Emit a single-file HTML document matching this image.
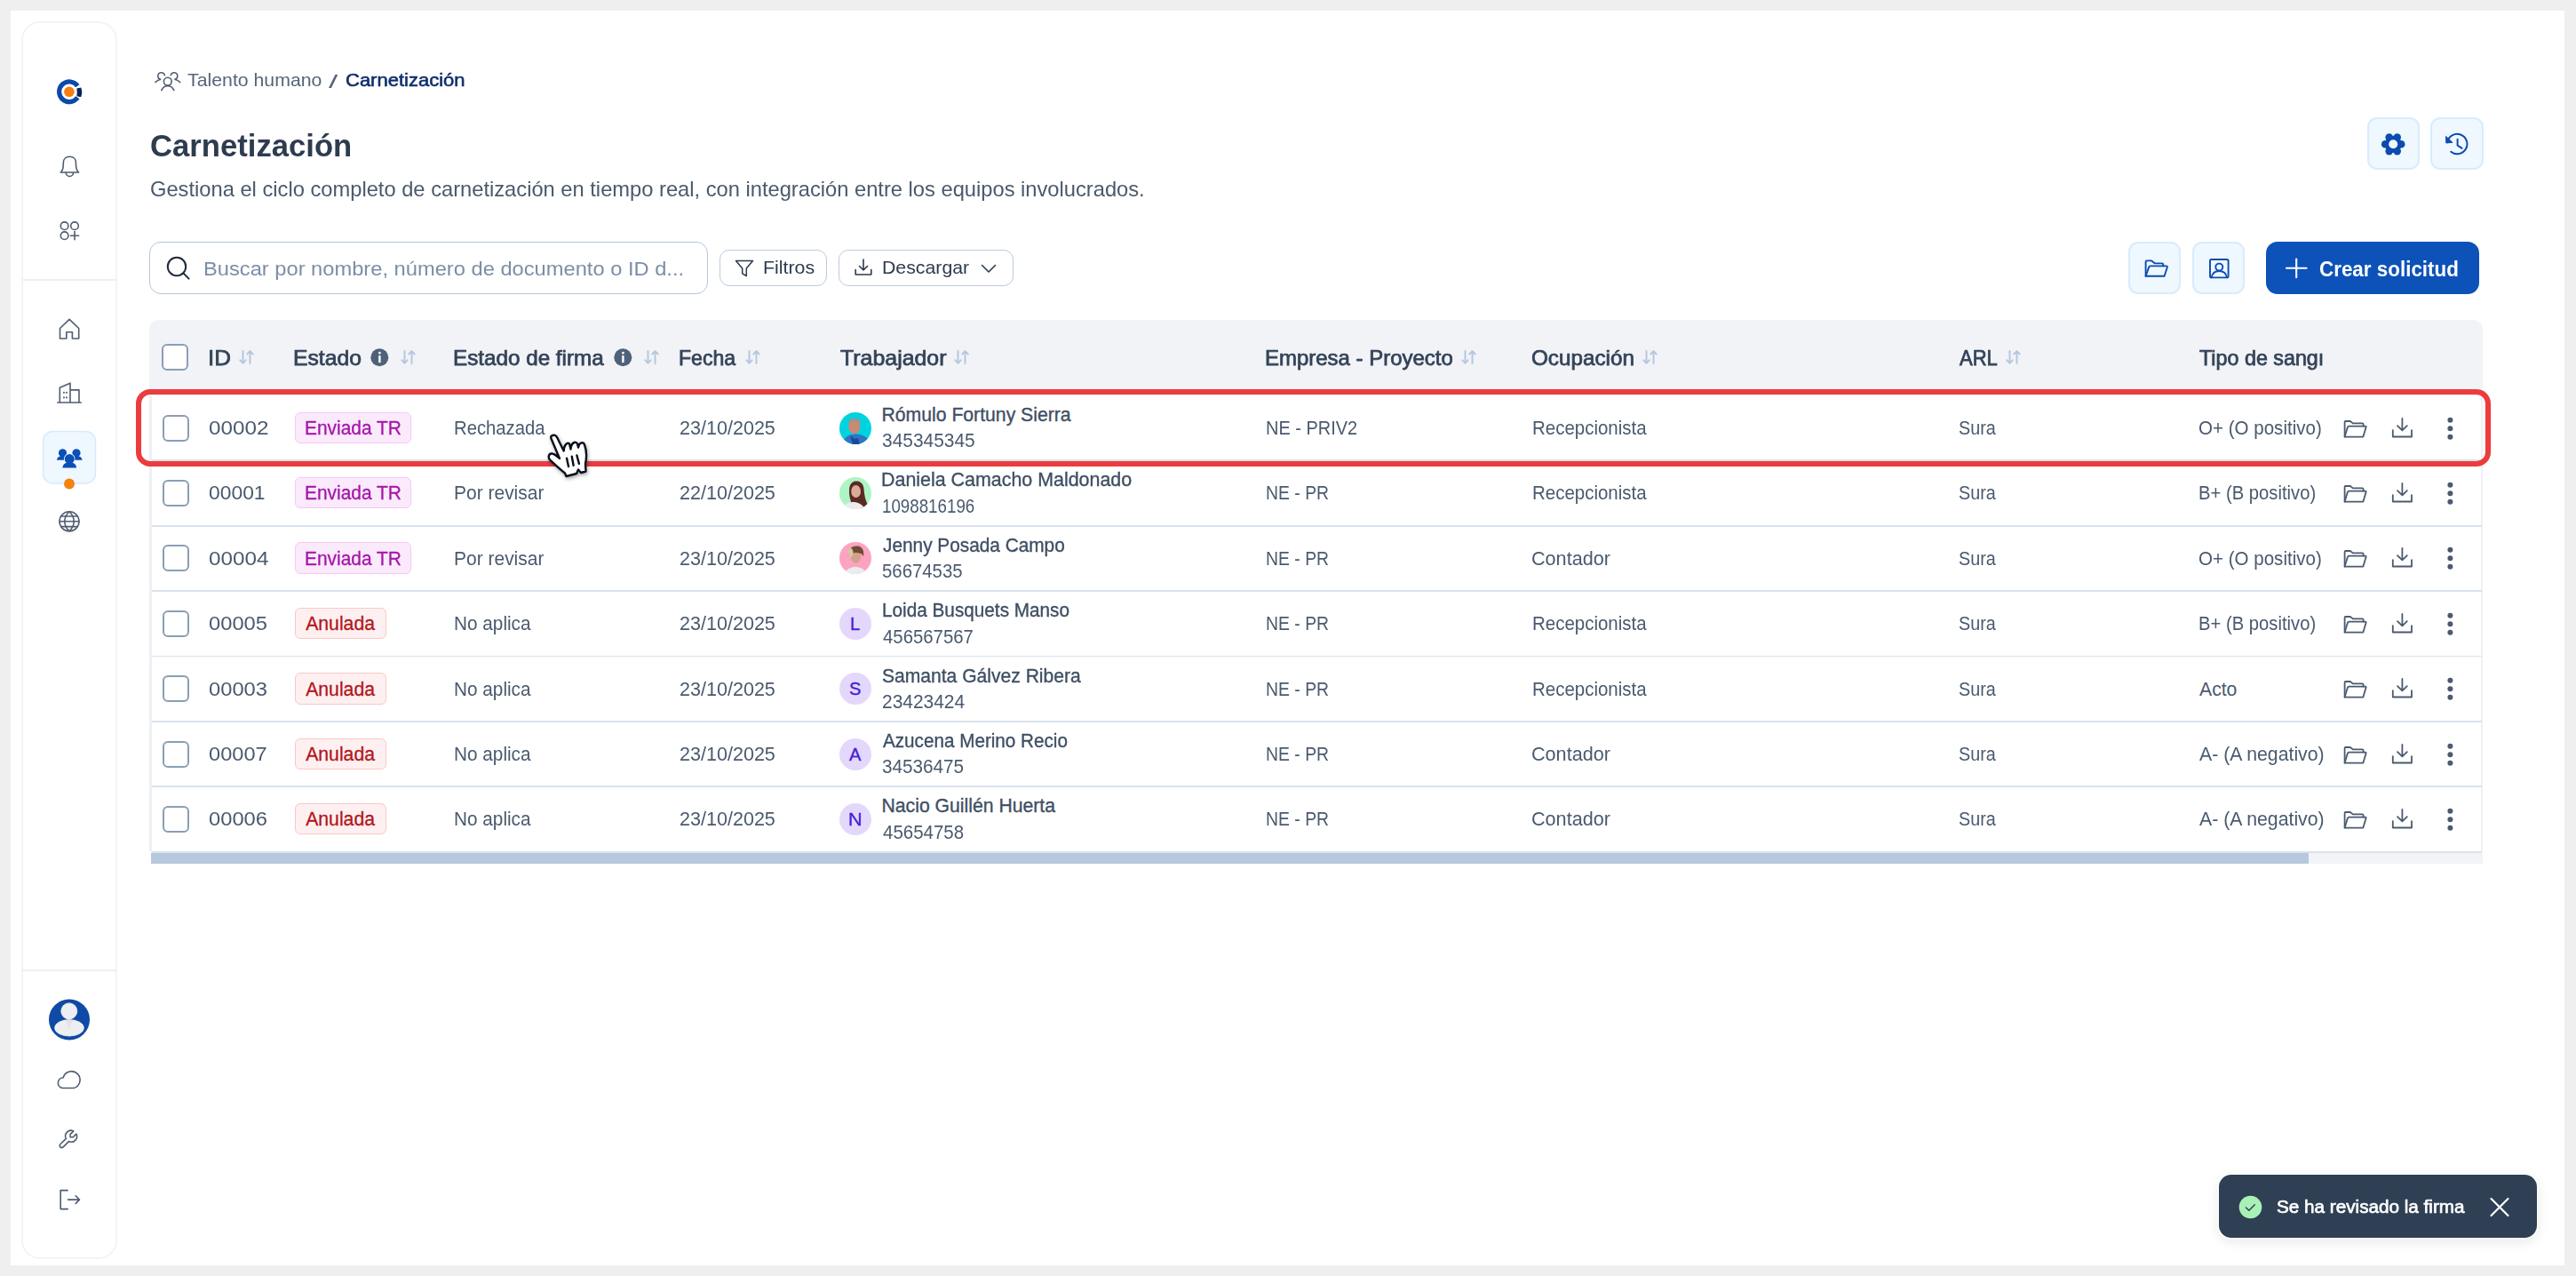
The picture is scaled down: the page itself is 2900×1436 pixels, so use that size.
<!DOCTYPE html>
<html><head><meta charset="utf-8"><style>
html,body{margin:0;padding:0;}
body{width:2900px;height:1436px;background:#efefef;position:relative;overflow:hidden;font-family:'Liberation Sans', sans-serif;}
svg{overflow:visible}
</style></head><body>
<div style="position:absolute;left:12px;top:12px;width:2875px;height:1412px;background:#fff"></div><div style="position:absolute;left:24px;top:24px;width:107.6px;height:1393px;border:2px solid #f2f4f7;border-radius:21px;box-sizing:border-box"></div><div style="position:absolute;left:25px;top:314px;width:105.6px;height:2px;background:#edeff4"></div><div style="position:absolute;left:25px;top:1091px;width:105.6px;height:2px;background:#edeff4"></div><svg style="position:absolute;left:0;top:0" width="140" height="1436" viewBox="0 0 140 1436">
<g fill="none" stroke="#4f5d70" stroke-width="1.6" stroke-linecap="round" stroke-linejoin="round">
<path d="M68.2 194 C70.6 192 71.3 189 71.3 185 V183.2 C71.3 178.9 74.4 176.2 78.4 176.2 C82.4 176.2 85.5 178.9 85.5 183.2 V185 C85.5 189 86.2 192 88.6 194 Z"/>
<path d="M74.3 194.4 A4.1 4.1 0 0 0 82.5 194.4"/>
<circle cx="72.6" cy="254.2" r="4.3"/><circle cx="84" cy="254.2" r="4.3"/><circle cx="72.6" cy="265.2" r="4.3"/>
<path d="M84 260.6 V269.8 M79.4 265.2 H88.6"/>
<path d="M67.5 381 V369.5 L78.1 359.3 L88.7 369.5 V381 H81.4 V373.8 H74.8 V381 Z"/>
<path d="M64.8 453 H91.2 M67.3 453 V436.2 L79 431.2 V453 M79 438.9 H89 V453"/>
<path d="M72 441.6 v.3 M75 441.6 v.3 M72 447.2 v.3 M75 447.2 v.3" stroke-width="1.9"/>
<circle cx="78" cy="586.8" r="11"/>
<path d="M67 586.8 H89 M68.6 581 H87.4 M68.6 592.6 H87.4"/>
<path d="M78 575.8 C74.2 579.5 72.8 583 72.8 586.8 C72.8 590.6 74.2 594.1 78 597.8 C81.8 594.1 83.2 590.6 83.2 586.8 C83.2 583 81.8 579.5 78 575.8 Z"/>
<path d="M70.2 1224.5 A5.9 5.9 0 0 1 71.2 1212.8 A9.6 9.6 0 1 1 83.2 1224.5 Z"/>
<path d="M76.2 1339.6 H68.2 V1360.6 H76.2 M76.6 1350.1 H89.5 M85.2 1345.8 L89.5 1350.1 L85.2 1354.4"/>
</g>
<g transform="translate(64.2 1269.2) scale(1.06)" fill="none" stroke="#4f5d70" stroke-width="1.5" stroke-linecap="round" stroke-linejoin="round">
<path d="M17 10h-3v-3l3.5-3.5a6 6 0 0 0-8 8l-6 6a2 2 0 0 0 3 3l6-6a6 6 0 0 0 8-8l-3.5 3.5"/>
</g>
<path d="M89.47 95.27 A14 14 0 1 0 89.47 111.33 L85.21 108.35 A8.8 8.8 0 1 1 85.21 98.25 Z" fill="#0b49aa"/>
<circle cx="77.9" cy="103.3" r="5.8" fill="#f57f0c"/>
<path d="M86.4 99.6 L91.2 98.6 A14.5 14.5 0 0 1 91.2 109.2 L86.4 108.2 Q87.1 103.9 86.4 99.6 Z" fill="#06215c"/>
<rect x="48.5" y="485.5" width="59" height="58.5" rx="11" fill="#eff7ff" stroke="#d6ebfc" stroke-width="1.5"/>
<g fill="#0b4fb8">
<circle cx="70.5" cy="509.8" r="4.6"/><path d="M63.9 517.8 C64.3 514.4 66.9 512.9 70.5 512.9 C74.1 512.9 76.7 514.4 77.1 517.8 Z"/>
<circle cx="86" cy="509.8" r="4.6"/><path d="M79.4 517.8 C79.8 514.4 82.4 512.9 86 512.9 C89.6 512.9 92.2 514.4 92.6 517.8 Z"/>
<g stroke="#eff7ff" stroke-width="2" paint-order="stroke">
<circle cx="78.25" cy="516.5" r="5.3"/><path d="M70.4 526.6 C70.9 521.8 74 520.2 78.25 520.2 C82.5 520.2 85.6 521.8 86.1 526.6 Z"/>
</g>
<circle cx="78.25" cy="516.5" r="5.3"/>
</g>
<circle cx="78" cy="544.5" r="6" fill="#f5820f"/>
<circle cx="78" cy="1147.4" r="23" fill="#0e4aa6"/>
<ellipse cx="78" cy="1156.8" rx="16.4" ry="9.2" fill="#eceef1" stroke="#f8f8f6" stroke-width="0.8"/>
<circle cx="77.8" cy="1137.9" r="9" fill="#eceef1" stroke="#f8f8f6" stroke-width="0.8"/>
<path d="M73.8 1148 L78 1158 L82.2 1148 Z" fill="#e3e4e7"/>
</svg><svg style="position:absolute;left:168px;top:74px" width="44" height="34" viewBox="168 74 44 34" fill="none" stroke="#4f5d70" stroke-width="1.6" stroke-linecap="round">
<path d="M185.3 84.6 A3.8 3.8 0 1 0 181.2 89.3 Q177.4 89.8 175 92.6"/>
<path d="M192.3 84.6 A3.8 3.8 0 1 1 196.4 89.3 Q200.2 89.8 202.6 92.6"/>
<circle cx="188.8" cy="91.7" r="4.4"/>
<path d="M181.8 101.6 Q184 96.8 188.8 96.8 Q193.6 96.8 195.9 101.6"/>
</svg><div style="position:absolute;left:2664.5px;top:132.4px;width:59.0px;height:59.0px;background:#eff7ff;border:2px solid #d8ecfc;border-radius:11px;box-sizing:border-box"></div><div style="position:absolute;left:2736.4px;top:132.4px;width:59.19999999999982px;height:59.0px;background:#eff7ff;border:2px solid #d8ecfc;border-radius:11px;box-sizing:border-box"></div><svg style="position:absolute;left:2660px;top:128px" width="140" height="70" viewBox="2660 128 140 70">
<g fill="#0c4bb0"><circle cx="2694.2" cy="162.3" r="9.6"/><circle cx="2703.20" cy="162.30" r="4.3"/><circle cx="2698.70" cy="170.09" r="4.3"/><circle cx="2689.70" cy="170.09" r="4.3"/><circle cx="2685.20" cy="162.30" r="4.3"/><circle cx="2689.70" cy="154.51" r="4.3"/><circle cx="2698.70" cy="154.51" r="4.3"/></g>
<circle cx="2694.2" cy="162.3" r="5" fill="#eff7ff"/>
<path d="M2755.2 160.2 A11.2 11.2 0 1 1 2759.2 170.8" fill="none" stroke="#0c4bb0" stroke-width="2" stroke-linecap="round"/>
<path d="M2753.6 153.4 L2753.8 160.9 L2761 160.4 Z" fill="#0c4bb0" stroke="#0c4bb0" stroke-width="1" stroke-linejoin="round"/>
<path d="M2766.6 156.8 V163.6 L2771.6 166.8" fill="none" stroke="#0c4bb0" stroke-width="2" stroke-linecap="round" stroke-linejoin="round"/>
</svg><div style="position:absolute;left:168.4px;top:271.8px;width:628.6px;height:59.39999999999998px;border:1.7px solid #b5c6dc;border-radius:13px;box-sizing:border-box"></div><svg style="position:absolute;left:186px;top:287px" width="30" height="30" viewBox="0 0 30 30" fill="none" stroke="#1f2b3b" stroke-width="2.0" stroke-linecap="round">
<circle cx="13" cy="13" r="10.2"/><path d="M20.6 20.6l6 6"/>
</svg><div style="position:absolute;left:810.2px;top:280.9px;width:120.89999999999998px;height:41.10000000000002px;border:1.9px solid #bccbdf;border-radius:11px;box-sizing:border-box"></div><svg style="position:absolute;left:826px;top:291px" width="24" height="22" viewBox="0 0 24 22" fill="none" stroke="#2c3a4e" stroke-width="1.5" stroke-linejoin="round">
<path d="M2.5 2.5h19l-7.2 8.6v8.4l-4.6-2.6v-5.8z"/>
</svg><div style="position:absolute;left:943.6px;top:280.9px;width:197.69999999999993px;height:41.10000000000002px;border:1.9px solid #bccbdf;border-radius:11px;box-sizing:border-box"></div><svg style="position:absolute;left:960px;top:290px" width="24" height="22" viewBox="0 0 24 22" fill="none" stroke="#2c3a4e" stroke-width="1.6" stroke-linecap="round" stroke-linejoin="round">
<path d="M3.2 13.5v5.5h17.6v-5.5"/><path d="M12 2v12M7.5 9.5L12 14l4.5-4.5"/>
</svg><svg style="position:absolute;left:1103px;top:295px" width="20" height="14" viewBox="0 0 20 14" fill="none" stroke="#2c3a4e" stroke-width="1.6" stroke-linecap="round" stroke-linejoin="round">
<path d="M2.5 3.5L10 11l7.5-7.5"/>
</svg><div style="position:absolute;left:2395.5px;top:271.7px;width:59.80000000000018px;height:59.60000000000002px;background:#eff7ff;border:2px solid #d8ecfc;border-radius:11px;box-sizing:border-box"></div><div style="position:absolute;left:2467.6px;top:271.7px;width:59.59999999999991px;height:59.60000000000002px;background:#eff7ff;border:2px solid #d8ecfc;border-radius:11px;box-sizing:border-box"></div><svg style="position:absolute;left:2400px;top:280px" width="130" height="45" viewBox="2400 280 130 45" fill="none" stroke="#0c4bb0" stroke-width="1.9" stroke-linejoin="round" stroke-linecap="round">
<path d="M2415.6 310.8 V294.8 Q2415.6 293.4 2417 293.4 H2422.2 L2426 296.4 H2434 Q2435.2 296.4 2435.2 297.6 V299.4"/>
<path d="M2415.6 310.8 L2419.2 300.6 Q2419.6 299.4 2420.8 299.4 H2438.8 Q2440.2 299.4 2439.8 300.8 L2436.6 310.8 H2415.6 Z"/>
<rect x="2488" y="292" width="20.6" height="20.4" rx="1.6"/>
<circle cx="2498.3" cy="300.6" r="4"/>
<path d="M2489.6 312.2 C2490.6 307.4 2494 305 2498.3 305 C2502.6 305 2506 307.4 2507 312.2"/>
</svg><div style="position:absolute;left:2551.2px;top:271.7px;width:240.0px;height:59.60000000000002px;background:#0c52b9;border-radius:13px"></div><svg style="position:absolute;left:2572px;top:290px" width="27" height="27" viewBox="0 0 27 27" fill="none" stroke="#fff" stroke-width="2.1" stroke-linecap="round">
<path d="M13.2 1.6v20.6M2 11.8h22.6"/>
</svg><div style="position:absolute;left:168.2px;top:360px;width:2626.6000000000004px;height:84.80000000000001px;background:#f1f3f7;border-radius:11px 11px 0 0"></div><div style="position:absolute;left:168.2px;top:444.8px;width:2.5999999999999943px;height:513.8000000000002px;background:#eef0f5"></div><div style="position:absolute;left:2793.2000000000003px;top:444.8px;width:1.599999999999909px;height:513.8000000000002px;background:#eff1f6"></div><div style="position:absolute;left:170.79999999999998px;top:517.3000000000001px;width:2623.5px;height:1.8999999999999773px;background:#d9e2ee"></div><div style="position:absolute;left:170.79999999999998px;top:590.7px;width:2623.5px;height:1.8999999999999773px;background:#d9e2ee"></div><div style="position:absolute;left:170.79999999999998px;top:664.1px;width:2623.5px;height:1.8999999999999773px;background:#d9e2ee"></div><div style="position:absolute;left:170.79999999999998px;top:737.5000000000001px;width:2623.5px;height:1.8999999999999773px;background:#d9e2ee"></div><div style="position:absolute;left:170.79999999999998px;top:810.9px;width:2623.5px;height:1.8999999999999773px;background:#d9e2ee"></div><div style="position:absolute;left:170.79999999999998px;top:884.3000000000001px;width:2623.5px;height:1.8999999999999773px;background:#d9e2ee"></div><div style="position:absolute;left:170.79999999999998px;top:957.7000000000002px;width:2623.5px;height:1.8999999999999773px;background:#d9e2ee"></div><div style="position:absolute;left:169.7px;top:959.5px;width:2625.1000000000004px;height:12.100000000000023px;background:#f1f3f7"></div><div style="position:absolute;left:169.7px;top:959.5px;width:2429.8px;height:12.100000000000023px;background:#b7c8dd"></div><div style="position:absolute;left:181.5px;top:387.3px;width:30.0px;height:30.0px;border:2px solid #8b9eb4;border-radius:6px;box-sizing:border-box;background:#fff"></div><svg style="position:absolute;left:268.5px;top:394px" width="17" height="16" viewBox="0 0 17 16" fill="none" stroke="#b4c6de" stroke-width="1.9" stroke-linecap="round" stroke-linejoin="round">
<path d="M4.5 0.9v13.8M1.3 11.3l3.2 3.4 3.2-3.4"/><path d="M12.5 15.1V1.1M9.3 4.5l3.2-3.4 3.2 3.4"/></svg><svg style="position:absolute;left:416.8px;top:392px" width="21" height="21" viewBox="0 0 21 21">
<circle cx="10.3" cy="10.2" r="10" fill="#4f6179"/><rect x="9.2" y="3.9" width="2.4" height="2.5" fill="#fff"/><rect x="9.2" y="8.1" width="2.4" height="8" fill="#fff"/></svg><svg style="position:absolute;left:450.5px;top:394px" width="17" height="16" viewBox="0 0 17 16" fill="none" stroke="#b4c6de" stroke-width="1.9" stroke-linecap="round" stroke-linejoin="round">
<path d="M4.5 0.9v13.8M1.3 11.3l3.2 3.4 3.2-3.4"/><path d="M12.5 15.1V1.1M9.3 4.5l3.2-3.4 3.2 3.4"/></svg><svg style="position:absolute;left:691.3px;top:392px" width="21" height="21" viewBox="0 0 21 21">
<circle cx="10.3" cy="10.2" r="10" fill="#4f6179"/><rect x="9.2" y="3.9" width="2.4" height="2.5" fill="#fff"/><rect x="9.2" y="8.1" width="2.4" height="8" fill="#fff"/></svg><svg style="position:absolute;left:725px;top:394px" width="17" height="16" viewBox="0 0 17 16" fill="none" stroke="#b4c6de" stroke-width="1.9" stroke-linecap="round" stroke-linejoin="round">
<path d="M4.5 0.9v13.8M1.3 11.3l3.2 3.4 3.2-3.4"/><path d="M12.5 15.1V1.1M9.3 4.5l3.2-3.4 3.2 3.4"/></svg><svg style="position:absolute;left:838.5px;top:394px" width="17" height="16" viewBox="0 0 17 16" fill="none" stroke="#b4c6de" stroke-width="1.9" stroke-linecap="round" stroke-linejoin="round">
<path d="M4.5 0.9v13.8M1.3 11.3l3.2 3.4 3.2-3.4"/><path d="M12.5 15.1V1.1M9.3 4.5l3.2-3.4 3.2 3.4"/></svg><svg style="position:absolute;left:1074px;top:394px" width="17" height="16" viewBox="0 0 17 16" fill="none" stroke="#b4c6de" stroke-width="1.9" stroke-linecap="round" stroke-linejoin="round">
<path d="M4.5 0.9v13.8M1.3 11.3l3.2 3.4 3.2-3.4"/><path d="M12.5 15.1V1.1M9.3 4.5l3.2-3.4 3.2 3.4"/></svg><svg style="position:absolute;left:1644.5px;top:394px" width="17" height="16" viewBox="0 0 17 16" fill="none" stroke="#b4c6de" stroke-width="1.9" stroke-linecap="round" stroke-linejoin="round">
<path d="M4.5 0.9v13.8M1.3 11.3l3.2 3.4 3.2-3.4"/><path d="M12.5 15.1V1.1M9.3 4.5l3.2-3.4 3.2 3.4"/></svg><svg style="position:absolute;left:1848.7px;top:394px" width="17" height="16" viewBox="0 0 17 16" fill="none" stroke="#b4c6de" stroke-width="1.9" stroke-linecap="round" stroke-linejoin="round">
<path d="M4.5 0.9v13.8M1.3 11.3l3.2 3.4 3.2-3.4"/><path d="M12.5 15.1V1.1M9.3 4.5l3.2-3.4 3.2 3.4"/></svg><svg style="position:absolute;left:2258px;top:394px" width="17" height="16" viewBox="0 0 17 16" fill="none" stroke="#b4c6de" stroke-width="1.9" stroke-linecap="round" stroke-linejoin="round">
<path d="M4.5 0.9v13.8M1.3 11.3l3.2 3.4 3.2-3.4"/><path d="M12.5 15.1V1.1M9.3 4.5l3.2-3.4 3.2 3.4"/></svg><div style="position:absolute;left:183.3px;top:466.5px;width:30.0px;height:30.0px;border:2px solid #8b9eb4;border-radius:6px;box-sizing:border-box;background:#fff"></div><div style="position:absolute;left:331.7px;top:463.5px;width:131.8px;height:35.5px;background:#fbeafc;border:1.5px solid #f6c9f3;border-radius:6px;box-sizing:border-box"></div><div style="position:absolute;left:945px;top:463.5px;width:36px;height:36px;border-radius:50%;background:#00d3e0;overflow:hidden"><svg width="36" height="36" viewBox="0 0 36 36"><path d="M3 36C5 28 11 24.5 18 24.5S31 27.5 35 33V36z" fill="#3273c4"/><path d="M12 26l5 4 4-1 2 7h-8z" fill="#1a4a96"/><ellipse cx="16.8" cy="16.2" rx="6.6" ry="8" fill="#c98a74"/><path d="M10 14C10 8.5 13 6.5 17 6.5S23.8 8.5 23.8 14C22.5 11 20 10 17 10S11 11 10 14z" fill="#9a9390"/></svg></div><svg style="position:absolute;left:2630px;top:461.5px" width="140" height="40" viewBox="2630 461.5 140 40" fill="none" stroke="#4b5a6f" stroke-width="1.8" stroke-linejoin="round" stroke-linecap="round">
<path d="M2639.6 491.1 V474.5 Q2639.6 473.5 2640.6 473.5 H2645.8 L2648.8 475.9 H2659.4 Q2660.6 475.9 2660.6 477.1 V479.1"/>
<path d="M2639.6 491.1 L2643 480.1 Q2643.4 479.1 2644.4 479.1 H2662.8 Q2664 479.1 2663.6 480.3 L2660.4 491.1 Z"/>
<path d="M2693.8 483.7 V491.0 H2715 V483.7"/>
<path d="M2704.4 470.5 V483.9 M2699 478.7 L2704.4 483.9 L2709.8 478.7"/>
<g fill="#4b5a6f" stroke="none"><circle cx="2758.4" cy="472.3" r="3"/><circle cx="2758.4" cy="481.7" r="3"/><circle cx="2758.4" cy="491.2" r="3"/></g>
</svg><div style="position:absolute;left:183.3px;top:539.9000000000001px;width:30.0px;height:30.0px;border:2px solid #8b9eb4;border-radius:6px;box-sizing:border-box;background:#fff"></div><div style="position:absolute;left:331.7px;top:536.9000000000001px;width:131.8px;height:35.5px;background:#fbeafc;border:1.5px solid #f6c9f3;border-radius:6px;box-sizing:border-box"></div><div style="position:absolute;left:945px;top:536.9000000000001px;width:36px;height:36px;border-radius:50%;background:#aef5c6;overflow:hidden"><svg width="36" height="36" viewBox="0 0 36 36"><path d="M11 14C11.5 6 16 4.5 19 4.5S27 6 27.5 13C28 19 29 26 32 31L26 35L14 31C12 25 10.5 19 11 14z" fill="#5a2b23"/><path d="M2 36C5 30 11 28 16.5 28C22 28.5 26 31 29 36z" fill="#ececec"/><ellipse cx="18.6" cy="16" rx="5.4" ry="7" fill="#dcab98"/></svg></div><svg style="position:absolute;left:2630px;top:534.9000000000001px" width="140" height="40" viewBox="2630 534.9000000000001 140 40" fill="none" stroke="#4b5a6f" stroke-width="1.8" stroke-linejoin="round" stroke-linecap="round">
<path d="M2639.6 564.5000000000001 V547.9000000000001 Q2639.6 546.9000000000001 2640.6 546.9000000000001 H2645.8 L2648.8 549.3000000000001 H2659.4 Q2660.6 549.3000000000001 2660.6 550.5000000000001 V552.5000000000001"/>
<path d="M2639.6 564.5000000000001 L2643 553.5000000000001 Q2643.4 552.5000000000001 2644.4 552.5000000000001 H2662.8 Q2664 552.5000000000001 2663.6 553.7 L2660.4 564.5000000000001 Z"/>
<path d="M2693.8 557.1000000000001 V564.4000000000001 H2715 V557.1000000000001"/>
<path d="M2704.4 543.9000000000001 V557.3000000000001 M2699 552.1000000000001 L2704.4 557.3000000000001 L2709.8 552.1000000000001"/>
<g fill="#4b5a6f" stroke="none"><circle cx="2758.4" cy="545.7" r="3"/><circle cx="2758.4" cy="555.1000000000001" r="3"/><circle cx="2758.4" cy="564.6000000000001" r="3"/></g>
</svg><div style="position:absolute;left:183.3px;top:613.3000000000001px;width:30.0px;height:30.0px;border:2px solid #8b9eb4;border-radius:6px;box-sizing:border-box;background:#fff"></div><div style="position:absolute;left:331.7px;top:610.3000000000001px;width:131.8px;height:35.5px;background:#fbeafc;border:1.5px solid #f6c9f3;border-radius:6px;box-sizing:border-box"></div><div style="position:absolute;left:945px;top:610.3000000000001px;width:36px;height:36px;border-radius:50%;background:#fca3bf;overflow:hidden"><svg width="36" height="36" viewBox="0 0 36 36"><path d="M5 36C8 30 13 28 18 28S28 30 31 36z" fill="#e9edf0"/><ellipse cx="18.5" cy="16.5" rx="5.6" ry="7.2" fill="#d3a18d"/><path d="M10 16C9 8 14 4 20 4.5S28 9.5 27 16L25 13.5C22 11.5 16 11 12 14z" fill="#6e4c36"/><ellipse cx="12.5" cy="12" rx="3" ry="5" fill="#d8c6a6"/></svg></div><svg style="position:absolute;left:2630px;top:608.3000000000001px" width="140" height="40" viewBox="2630 608.3000000000001 140 40" fill="none" stroke="#4b5a6f" stroke-width="1.8" stroke-linejoin="round" stroke-linecap="round">
<path d="M2639.6 637.9000000000001 V621.3000000000001 Q2639.6 620.3000000000001 2640.6 620.3000000000001 H2645.8 L2648.8 622.7 H2659.4 Q2660.6 622.7 2660.6 623.9000000000001 V625.9000000000001"/>
<path d="M2639.6 637.9000000000001 L2643 626.9000000000001 Q2643.4 625.9000000000001 2644.4 625.9000000000001 H2662.8 Q2664 625.9000000000001 2663.6 627.1 L2660.4 637.9000000000001 Z"/>
<path d="M2693.8 630.5000000000001 V637.8000000000001 H2715 V630.5000000000001"/>
<path d="M2704.4 617.3000000000001 V630.7 M2699 625.5000000000001 L2704.4 630.7 L2709.8 625.5000000000001"/>
<g fill="#4b5a6f" stroke="none"><circle cx="2758.4" cy="619.1" r="3"/><circle cx="2758.4" cy="628.5000000000001" r="3"/><circle cx="2758.4" cy="638.0000000000001" r="3"/></g>
</svg><div style="position:absolute;left:183.3px;top:686.7px;width:30.0px;height:30.0px;border:2px solid #8b9eb4;border-radius:6px;box-sizing:border-box;background:#fff"></div><div style="position:absolute;left:331.7px;top:683.7px;width:102.90000000000003px;height:35.5px;background:#fef0f0;border:1.5px solid #fac8c8;border-radius:6px;box-sizing:border-box"></div><div style="position:absolute;left:945px;top:683.7px;width:36px;height:36px;border-radius:50%;background:#e3d8fb"></div><svg style="position:absolute;left:2630px;top:681.7px" width="140" height="40" viewBox="2630 681.7 140 40" fill="none" stroke="#4b5a6f" stroke-width="1.8" stroke-linejoin="round" stroke-linecap="round">
<path d="M2639.6 711.3000000000001 V694.7 Q2639.6 693.7 2640.6 693.7 H2645.8 L2648.8 696.1 H2659.4 Q2660.6 696.1 2660.6 697.3000000000001 V699.3000000000001"/>
<path d="M2639.6 711.3000000000001 L2643 700.3000000000001 Q2643.4 699.3000000000001 2644.4 699.3000000000001 H2662.8 Q2664 699.3000000000001 2663.6 700.5 L2660.4 711.3000000000001 Z"/>
<path d="M2693.8 703.9000000000001 V711.2 H2715 V703.9000000000001"/>
<path d="M2704.4 690.7 V704.1 M2699 698.9000000000001 L2704.4 704.1 L2709.8 698.9000000000001"/>
<g fill="#4b5a6f" stroke="none"><circle cx="2758.4" cy="692.5" r="3"/><circle cx="2758.4" cy="701.9000000000001" r="3"/><circle cx="2758.4" cy="711.4000000000001" r="3"/></g>
</svg><div style="position:absolute;left:183.3px;top:760.1000000000001px;width:30.0px;height:30.0px;border:2px solid #8b9eb4;border-radius:6px;box-sizing:border-box;background:#fff"></div><div style="position:absolute;left:331.7px;top:757.1000000000001px;width:102.90000000000003px;height:35.5px;background:#fef0f0;border:1.5px solid #fac8c8;border-radius:6px;box-sizing:border-box"></div><div style="position:absolute;left:945px;top:757.1000000000001px;width:36px;height:36px;border-radius:50%;background:#e3d8fb"></div><svg style="position:absolute;left:2630px;top:755.1000000000001px" width="140" height="40" viewBox="2630 755.1000000000001 140 40" fill="none" stroke="#4b5a6f" stroke-width="1.8" stroke-linejoin="round" stroke-linecap="round">
<path d="M2639.6 784.7000000000002 V768.1000000000001 Q2639.6 767.1000000000001 2640.6 767.1000000000001 H2645.8 L2648.8 769.5000000000001 H2659.4 Q2660.6 769.5000000000001 2660.6 770.7000000000002 V772.7000000000002"/>
<path d="M2639.6 784.7000000000002 L2643 773.7000000000002 Q2643.4 772.7000000000002 2644.4 772.7000000000002 H2662.8 Q2664 772.7000000000002 2663.6 773.9000000000001 L2660.4 784.7000000000002 Z"/>
<path d="M2693.8 777.3000000000002 V784.6000000000001 H2715 V777.3000000000002"/>
<path d="M2704.4 764.1000000000001 V777.5000000000001 M2699 772.3000000000002 L2704.4 777.5000000000001 L2709.8 772.3000000000002"/>
<g fill="#4b5a6f" stroke="none"><circle cx="2758.4" cy="765.9000000000001" r="3"/><circle cx="2758.4" cy="775.3000000000002" r="3"/><circle cx="2758.4" cy="784.8000000000002" r="3"/></g>
</svg><div style="position:absolute;left:183.3px;top:833.5px;width:30.0px;height:30.0px;border:2px solid #8b9eb4;border-radius:6px;box-sizing:border-box;background:#fff"></div><div style="position:absolute;left:331.7px;top:830.5px;width:102.90000000000003px;height:35.5px;background:#fef0f0;border:1.5px solid #fac8c8;border-radius:6px;box-sizing:border-box"></div><div style="position:absolute;left:945px;top:830.5px;width:36px;height:36px;border-radius:50%;background:#e3d8fb"></div><svg style="position:absolute;left:2630px;top:828.5px" width="140" height="40" viewBox="2630 828.5 140 40" fill="none" stroke="#4b5a6f" stroke-width="1.8" stroke-linejoin="round" stroke-linecap="round">
<path d="M2639.6 858.1 V841.5 Q2639.6 840.5 2640.6 840.5 H2645.8 L2648.8 842.9 H2659.4 Q2660.6 842.9 2660.6 844.1 V846.1"/>
<path d="M2639.6 858.1 L2643 847.1 Q2643.4 846.1 2644.4 846.1 H2662.8 Q2664 846.1 2663.6 847.3 L2660.4 858.1 Z"/>
<path d="M2693.8 850.7 V858.0 H2715 V850.7"/>
<path d="M2704.4 837.5 V850.9 M2699 845.7 L2704.4 850.9 L2709.8 845.7"/>
<g fill="#4b5a6f" stroke="none"><circle cx="2758.4" cy="839.3" r="3"/><circle cx="2758.4" cy="848.7" r="3"/><circle cx="2758.4" cy="858.2" r="3"/></g>
</svg><div style="position:absolute;left:183.3px;top:906.9000000000001px;width:30.0px;height:30.0px;border:2px solid #8b9eb4;border-radius:6px;box-sizing:border-box;background:#fff"></div><div style="position:absolute;left:331.7px;top:903.9000000000001px;width:102.90000000000003px;height:35.5px;background:#fef0f0;border:1.5px solid #fac8c8;border-radius:6px;box-sizing:border-box"></div><div style="position:absolute;left:945px;top:903.9000000000001px;width:36px;height:36px;border-radius:50%;background:#e3d8fb"></div><svg style="position:absolute;left:2630px;top:901.9000000000001px" width="140" height="40" viewBox="2630 901.9000000000001 140 40" fill="none" stroke="#4b5a6f" stroke-width="1.8" stroke-linejoin="round" stroke-linecap="round">
<path d="M2639.6 931.5000000000001 V914.9000000000001 Q2639.6 913.9000000000001 2640.6 913.9000000000001 H2645.8 L2648.8 916.3000000000001 H2659.4 Q2660.6 916.3000000000001 2660.6 917.5000000000001 V919.5000000000001"/>
<path d="M2639.6 931.5000000000001 L2643 920.5000000000001 Q2643.4 919.5000000000001 2644.4 919.5000000000001 H2662.8 Q2664 919.5000000000001 2663.6 920.7 L2660.4 931.5000000000001 Z"/>
<path d="M2693.8 924.1000000000001 V931.4000000000001 H2715 V924.1000000000001"/>
<path d="M2704.4 910.9000000000001 V924.3000000000001 M2699 919.1000000000001 L2704.4 924.3000000000001 L2709.8 919.1000000000001"/>
<g fill="#4b5a6f" stroke="none"><circle cx="2758.4" cy="912.7" r="3"/><circle cx="2758.4" cy="922.1000000000001" r="3"/><circle cx="2758.4" cy="931.6000000000001" r="3"/></g>
</svg>
<div style="position:absolute;left:211.00px;top:79.45px;font-size:21px;font-weight:400;color:#56657a;line-height:1;white-space:nowrap;transform:scaleX(1.0134);transform-origin:0 0;">Talento humano</div><div style="position:absolute;left:370.00px;top:81.15px;font-size:21px;font-weight:400;color:#56657a;line-height:1;white-space:nowrap;transform:scaleX(1.7667);transform-origin:0 0;">/</div><div style="position:absolute;left:388.95px;top:79.45px;font-size:21px;font-weight:400;color:#0f2e6b;line-height:1;white-space:nowrap;transform:scaleX(1.0476);transform-origin:0 0;-webkit-text-stroke:0.6px #0f2e6b;">Carnetización</div><div style="position:absolute;left:169.01px;top:145.55px;font-size:35px;font-weight:700;color:#2e3c50;line-height:1;white-space:nowrap;transform:scaleX(0.9903);transform-origin:0 0;">Carnetización</div><div style="position:absolute;left:168.98px;top:202.28px;font-size:23.2px;font-weight:400;color:#4a596c;line-height:1;white-space:nowrap;transform:scaleX(1.0220);transform-origin:0 0;">Gestiona el ciclo completo de carnetización en tiempo real, con integración entre los equipos involucrados.</div><div style="position:absolute;left:228.93px;top:291.14px;font-size:22.9px;font-weight:400;color:#7c8ea6;line-height:1;white-space:nowrap;transform:scaleX(1.0347);transform-origin:0 0;">Buscar por nombre, número de documento o ID d...</div><div style="position:absolute;left:859.47px;top:291.42px;font-size:20.8px;font-weight:400;color:#2c3a4e;line-height:1;white-space:nowrap;transform:scaleX(1.0273);transform-origin:0 0;">Filtros</div><div style="position:absolute;left:992.58px;top:291.42px;font-size:20.8px;font-weight:400;color:#2c3a4e;line-height:1;white-space:nowrap;transform:scaleX(1.0232);transform-origin:0 0;">Descargar</div><div style="position:absolute;left:2611.37px;top:291.00px;font-size:24px;font-weight:700;color:#ffffff;line-height:1;white-space:nowrap;transform:scaleX(0.9337);transform-origin:0 0;">Crear solicitud</div><div style="position:absolute;left:234.42px;top:390.77px;font-size:23.8px;font-weight:400;color:#334358;line-height:1;white-space:nowrap;transform:scaleX(1.0905);transform-origin:0 0;-webkit-text-stroke:0.75px #334358;">ID</div><div style="position:absolute;left:330.12px;top:390.77px;font-size:23.8px;font-weight:400;color:#334358;line-height:1;white-space:nowrap;transform:scaleX(1.0394);transform-origin:0 0;-webkit-text-stroke:0.75px #334358;">Estado</div><div style="position:absolute;left:509.96px;top:390.77px;font-size:23.8px;font-weight:400;color:#334358;line-height:1;white-space:nowrap;transform:scaleX(1.0182);transform-origin:0 0;-webkit-text-stroke:0.75px #334358;">Estado de firma</div><div style="position:absolute;left:763.66px;top:390.77px;font-size:23.8px;font-weight:400;color:#334358;line-height:1;white-space:nowrap;transform:scaleX(0.9708);transform-origin:0 0;-webkit-text-stroke:0.75px #334358;">Fecha</div><div style="position:absolute;left:945.60px;top:390.77px;font-size:23.8px;font-weight:400;color:#334358;line-height:1;white-space:nowrap;transform:scaleX(1.0465);transform-origin:0 0;-webkit-text-stroke:0.75px #334358;">Trabajador</div><div style="position:absolute;left:1423.69px;top:390.77px;font-size:23.8px;font-weight:400;color:#334358;line-height:1;white-space:nowrap;transform:scaleX(1.0072);transform-origin:0 0;-webkit-text-stroke:0.75px #334358;">Empresa - Proyecto</div><div style="position:absolute;left:1724.48px;top:390.77px;font-size:23.8px;font-weight:400;color:#334358;line-height:1;white-space:nowrap;transform:scaleX(1.0188);transform-origin:0 0;-webkit-text-stroke:0.75px #334358;">Ocupación</div><div style="position:absolute;left:2205.90px;top:390.77px;font-size:23.8px;font-weight:400;color:#334358;line-height:1;white-space:nowrap;transform:scaleX(0.9239);transform-origin:0 0;-webkit-text-stroke:0.75px #334358;">ARL</div><div style="position:absolute;left:2476.00px;top:390.77px;font-size:23.8px;font-weight:400;color:#334358;line-height:1;white-space:nowrap;transform:scaleX(0.9789);transform-origin:0 0;-webkit-text-stroke:0.75px #334358;">Tipo de sangı</div><div style="position:absolute;left:234.85px;top:470.98px;font-size:21.2px;font-weight:400;color:#4a5a6e;line-height:1;white-space:nowrap;transform:scaleX(1.1456);transform-origin:0 0;">00002</div><div style="position:absolute;left:343.21px;top:470.98px;font-size:21.2px;font-weight:400;color:#a416a9;line-height:1;white-space:nowrap;transform:scaleX(0.9880);transform-origin:0 0;-webkit-text-stroke:0.3px #a416a9;">Enviada TR</div><div style="position:absolute;left:511.04px;top:470.98px;font-size:21.2px;font-weight:400;color:#4a5a6e;line-height:1;white-space:nowrap;transform:scaleX(0.9561);transform-origin:0 0;">Rechazada</div><div style="position:absolute;left:764.58px;top:470.98px;font-size:21.2px;font-weight:400;color:#4a5a6e;line-height:1;white-space:nowrap;transform:scaleX(1.0171);transform-origin:0 0;">23/10/2025</div><div style="position:absolute;left:992.50px;top:455.98px;font-size:21.2px;font-weight:400;color:#3f4f64;line-height:1;white-space:nowrap;-webkit-text-stroke:0.35px #3f4f64;">Rómulo Fortuny Sierra</div><div style="position:absolute;left:992.51px;top:485.48px;font-size:21.2px;font-weight:400;color:#4a5a6e;line-height:1;white-space:nowrap;transform:scaleX(0.9867);transform-origin:0 0;">345345345</div><div style="position:absolute;left:1424.76px;top:470.98px;font-size:21.2px;font-weight:400;color:#4a5a6e;line-height:1;white-space:nowrap;transform:scaleX(0.9417);transform-origin:0 0;">NE - PRIV2</div><div style="position:absolute;left:1724.53px;top:470.98px;font-size:21.2px;font-weight:400;color:#4a5a6e;line-height:1;white-space:nowrap;transform:scaleX(0.9659);transform-origin:0 0;">Recepcionista</div><div style="position:absolute;left:2204.97px;top:470.98px;font-size:21.2px;font-weight:400;color:#4a5a6e;line-height:1;white-space:nowrap;transform:scaleX(0.9341);transform-origin:0 0;">Sura</div><div style="position:absolute;left:2475.03px;top:470.98px;font-size:21.2px;font-weight:400;color:#4a5a6e;line-height:1;white-space:nowrap;transform:scaleX(0.9702);transform-origin:0 0;">O+ (O positivo)</div><div style="position:absolute;left:234.92px;top:544.38px;font-size:21.2px;font-weight:400;color:#4a5a6e;line-height:1;white-space:nowrap;transform:scaleX(1.0789);transform-origin:0 0;">00001</div><div style="position:absolute;left:343.21px;top:544.38px;font-size:21.2px;font-weight:400;color:#a416a9;line-height:1;white-space:nowrap;transform:scaleX(0.9880);transform-origin:0 0;-webkit-text-stroke:0.3px #a416a9;">Enviada TR</div><div style="position:absolute;left:511.01px;top:544.38px;font-size:21.2px;font-weight:400;color:#4a5a6e;line-height:1;white-space:nowrap;transform:scaleX(0.9901);transform-origin:0 0;">Por revisar</div><div style="position:absolute;left:764.58px;top:544.38px;font-size:21.2px;font-weight:400;color:#4a5a6e;line-height:1;white-space:nowrap;transform:scaleX(1.0171);transform-origin:0 0;">22/10/2025</div><div style="position:absolute;left:992.49px;top:529.38px;font-size:21.2px;font-weight:400;color:#3f4f64;line-height:1;white-space:nowrap;transform:scaleX(1.0108);transform-origin:0 0;-webkit-text-stroke:0.35px #3f4f64;">Daniela Camacho Maldonado</div><div style="position:absolute;left:992.62px;top:558.88px;font-size:21.2px;font-weight:400;color:#4a5a6e;line-height:1;white-space:nowrap;transform:scaleX(0.8845);transform-origin:0 0;">1098816196</div><div style="position:absolute;left:1424.79px;top:544.38px;font-size:21.2px;font-weight:400;color:#4a5a6e;line-height:1;white-space:nowrap;transform:scaleX(0.9145);transform-origin:0 0;">NE - PR</div><div style="position:absolute;left:1724.53px;top:544.38px;font-size:21.2px;font-weight:400;color:#4a5a6e;line-height:1;white-space:nowrap;transform:scaleX(0.9659);transform-origin:0 0;">Recepcionista</div><div style="position:absolute;left:2204.97px;top:544.38px;font-size:21.2px;font-weight:400;color:#4a5a6e;line-height:1;white-space:nowrap;transform:scaleX(0.9341);transform-origin:0 0;">Sura</div><div style="position:absolute;left:2475.04px;top:544.38px;font-size:21.2px;font-weight:400;color:#4a5a6e;line-height:1;white-space:nowrap;transform:scaleX(0.9551);transform-origin:0 0;">B+ (B positivo)</div><div style="position:absolute;left:234.85px;top:617.78px;font-size:21.2px;font-weight:400;color:#4a5a6e;line-height:1;white-space:nowrap;transform:scaleX(1.1466);transform-origin:0 0;">00004</div><div style="position:absolute;left:343.21px;top:617.78px;font-size:21.2px;font-weight:400;color:#a416a9;line-height:1;white-space:nowrap;transform:scaleX(0.9880);transform-origin:0 0;-webkit-text-stroke:0.3px #a416a9;">Enviada TR</div><div style="position:absolute;left:511.01px;top:617.78px;font-size:21.2px;font-weight:400;color:#4a5a6e;line-height:1;white-space:nowrap;transform:scaleX(0.9901);transform-origin:0 0;">Por revisar</div><div style="position:absolute;left:764.58px;top:617.78px;font-size:21.2px;font-weight:400;color:#4a5a6e;line-height:1;white-space:nowrap;transform:scaleX(1.0171);transform-origin:0 0;">23/10/2025</div><div style="position:absolute;left:993.50px;top:602.78px;font-size:21.2px;font-weight:400;color:#3f4f64;line-height:1;white-space:nowrap;transform:scaleX(0.9822);transform-origin:0 0;-webkit-text-stroke:0.35px #3f4f64;">Jenny Posada Campo</div><div style="position:absolute;left:992.54px;top:632.28px;font-size:21.2px;font-weight:400;color:#4a5a6e;line-height:1;white-space:nowrap;transform:scaleX(0.9602);transform-origin:0 0;">56674535</div><div style="position:absolute;left:1424.79px;top:617.78px;font-size:21.2px;font-weight:400;color:#4a5a6e;line-height:1;white-space:nowrap;transform:scaleX(0.9145);transform-origin:0 0;">NE - PR</div><div style="position:absolute;left:1724.48px;top:617.78px;font-size:21.2px;font-weight:400;color:#4a5a6e;line-height:1;white-space:nowrap;transform:scaleX(1.0198);transform-origin:0 0;">Contador</div><div style="position:absolute;left:2204.97px;top:617.78px;font-size:21.2px;font-weight:400;color:#4a5a6e;line-height:1;white-space:nowrap;transform:scaleX(0.9341);transform-origin:0 0;">Sura</div><div style="position:absolute;left:2475.03px;top:617.78px;font-size:21.2px;font-weight:400;color:#4a5a6e;line-height:1;white-space:nowrap;transform:scaleX(0.9702);transform-origin:0 0;">O+ (O positivo)</div><div style="position:absolute;left:234.88px;top:691.18px;font-size:21.2px;font-weight:400;color:#4a5a6e;line-height:1;white-space:nowrap;transform:scaleX(1.1207);transform-origin:0 0;">00005</div><div style="position:absolute;left:344.20px;top:691.18px;font-size:21.2px;font-weight:400;color:#b3161d;line-height:1;white-space:nowrap;-webkit-text-stroke:0.3px #b3161d;">Anulada</div><div style="position:absolute;left:511.02px;top:691.18px;font-size:21.2px;font-weight:400;color:#4a5a6e;line-height:1;white-space:nowrap;transform:scaleX(0.9795);transform-origin:0 0;">No aplica</div><div style="position:absolute;left:764.58px;top:691.18px;font-size:21.2px;font-weight:400;color:#4a5a6e;line-height:1;white-space:nowrap;transform:scaleX(1.0171);transform-origin:0 0;">23/10/2025</div><div style="position:absolute;left:957.00px;top:691.70px;font-size:20px;font-weight:400;color:#4a1fd4;line-height:1;white-space:nowrap;-webkit-text-stroke:0.4px #4a1fd4;">L</div><div style="position:absolute;left:992.52px;top:676.18px;font-size:21.2px;font-weight:400;color:#3f4f64;line-height:1;white-space:nowrap;transform:scaleX(0.9790);transform-origin:0 0;-webkit-text-stroke:0.35px #3f4f64;">Loida Busquets Manso</div><div style="position:absolute;left:993.50px;top:705.68px;font-size:21.2px;font-weight:400;color:#4a5a6e;line-height:1;white-space:nowrap;transform:scaleX(0.9610);transform-origin:0 0;">456567567</div><div style="position:absolute;left:1424.79px;top:691.18px;font-size:21.2px;font-weight:400;color:#4a5a6e;line-height:1;white-space:nowrap;transform:scaleX(0.9145);transform-origin:0 0;">NE - PR</div><div style="position:absolute;left:1724.53px;top:691.18px;font-size:21.2px;font-weight:400;color:#4a5a6e;line-height:1;white-space:nowrap;transform:scaleX(0.9659);transform-origin:0 0;">Recepcionista</div><div style="position:absolute;left:2204.97px;top:691.18px;font-size:21.2px;font-weight:400;color:#4a5a6e;line-height:1;white-space:nowrap;transform:scaleX(0.9341);transform-origin:0 0;">Sura</div><div style="position:absolute;left:2475.04px;top:691.18px;font-size:21.2px;font-weight:400;color:#4a5a6e;line-height:1;white-space:nowrap;transform:scaleX(0.9551);transform-origin:0 0;">B+ (B positivo)</div><div style="position:absolute;left:234.88px;top:764.58px;font-size:21.2px;font-weight:400;color:#4a5a6e;line-height:1;white-space:nowrap;transform:scaleX(1.1207);transform-origin:0 0;">00003</div><div style="position:absolute;left:344.20px;top:764.58px;font-size:21.2px;font-weight:400;color:#b3161d;line-height:1;white-space:nowrap;-webkit-text-stroke:0.3px #b3161d;">Anulada</div><div style="position:absolute;left:511.02px;top:764.58px;font-size:21.2px;font-weight:400;color:#4a5a6e;line-height:1;white-space:nowrap;transform:scaleX(0.9795);transform-origin:0 0;">No aplica</div><div style="position:absolute;left:764.58px;top:764.58px;font-size:21.2px;font-weight:400;color:#4a5a6e;line-height:1;white-space:nowrap;transform:scaleX(1.0171);transform-origin:0 0;">23/10/2025</div><div style="position:absolute;left:956.00px;top:765.10px;font-size:20px;font-weight:400;color:#4a1fd4;line-height:1;white-space:nowrap;-webkit-text-stroke:0.4px #4a1fd4;">S</div><div style="position:absolute;left:992.51px;top:749.58px;font-size:21.2px;font-weight:400;color:#3f4f64;line-height:1;white-space:nowrap;transform:scaleX(0.9946);transform-origin:0 0;-webkit-text-stroke:0.35px #3f4f64;">Samanta Gálvez Ribera</div><div style="position:absolute;left:992.51px;top:779.08px;font-size:21.2px;font-weight:400;color:#4a5a6e;line-height:1;white-space:nowrap;transform:scaleX(0.9882);transform-origin:0 0;">23423424</div><div style="position:absolute;left:1424.79px;top:764.58px;font-size:21.2px;font-weight:400;color:#4a5a6e;line-height:1;white-space:nowrap;transform:scaleX(0.9145);transform-origin:0 0;">NE - PR</div><div style="position:absolute;left:1724.53px;top:764.58px;font-size:21.2px;font-weight:400;color:#4a5a6e;line-height:1;white-space:nowrap;transform:scaleX(0.9659);transform-origin:0 0;">Recepcionista</div><div style="position:absolute;left:2204.97px;top:764.58px;font-size:21.2px;font-weight:400;color:#4a5a6e;line-height:1;white-space:nowrap;transform:scaleX(0.9341);transform-origin:0 0;">Sura</div><div style="position:absolute;left:2476.00px;top:764.58px;font-size:21.2px;font-weight:400;color:#4a5a6e;line-height:1;white-space:nowrap;">Acto</div><div style="position:absolute;left:234.89px;top:837.98px;font-size:21.2px;font-weight:400;color:#4a5a6e;line-height:1;white-space:nowrap;transform:scaleX(1.1140);transform-origin:0 0;">00007</div><div style="position:absolute;left:344.20px;top:837.98px;font-size:21.2px;font-weight:400;color:#b3161d;line-height:1;white-space:nowrap;-webkit-text-stroke:0.3px #b3161d;">Anulada</div><div style="position:absolute;left:511.02px;top:837.98px;font-size:21.2px;font-weight:400;color:#4a5a6e;line-height:1;white-space:nowrap;transform:scaleX(0.9795);transform-origin:0 0;">No aplica</div><div style="position:absolute;left:764.58px;top:837.98px;font-size:21.2px;font-weight:400;color:#4a5a6e;line-height:1;white-space:nowrap;transform:scaleX(1.0171);transform-origin:0 0;">23/10/2025</div><div style="position:absolute;left:956.00px;top:838.50px;font-size:20px;font-weight:400;color:#4a1fd4;line-height:1;white-space:nowrap;-webkit-text-stroke:0.4px #4a1fd4;">A</div><div style="position:absolute;left:993.50px;top:822.98px;font-size:21.2px;font-weight:400;color:#3f4f64;line-height:1;white-space:nowrap;transform:scaleX(0.9756);transform-origin:0 0;-webkit-text-stroke:0.35px #3f4f64;">Azucena Merino Recio</div><div style="position:absolute;left:992.52px;top:852.48px;font-size:21.2px;font-weight:400;color:#4a5a6e;line-height:1;white-space:nowrap;transform:scaleX(0.9774);transform-origin:0 0;">34536475</div><div style="position:absolute;left:1424.79px;top:837.98px;font-size:21.2px;font-weight:400;color:#4a5a6e;line-height:1;white-space:nowrap;transform:scaleX(0.9145);transform-origin:0 0;">NE - PR</div><div style="position:absolute;left:1724.48px;top:837.98px;font-size:21.2px;font-weight:400;color:#4a5a6e;line-height:1;white-space:nowrap;transform:scaleX(1.0198);transform-origin:0 0;">Contador</div><div style="position:absolute;left:2204.97px;top:837.98px;font-size:21.2px;font-weight:400;color:#4a5a6e;line-height:1;white-space:nowrap;transform:scaleX(0.9341);transform-origin:0 0;">Sura</div><div style="position:absolute;left:2476.00px;top:837.98px;font-size:21.2px;font-weight:400;color:#4a5a6e;line-height:1;white-space:nowrap;transform:scaleX(1.0036);transform-origin:0 0;">A- (A negativo)</div><div style="position:absolute;left:234.88px;top:911.38px;font-size:21.2px;font-weight:400;color:#4a5a6e;line-height:1;white-space:nowrap;transform:scaleX(1.1207);transform-origin:0 0;">00006</div><div style="position:absolute;left:344.20px;top:911.38px;font-size:21.2px;font-weight:400;color:#b3161d;line-height:1;white-space:nowrap;-webkit-text-stroke:0.3px #b3161d;">Anulada</div><div style="position:absolute;left:511.02px;top:911.38px;font-size:21.2px;font-weight:400;color:#4a5a6e;line-height:1;white-space:nowrap;transform:scaleX(0.9795);transform-origin:0 0;">No aplica</div><div style="position:absolute;left:764.58px;top:911.38px;font-size:21.2px;font-weight:400;color:#4a5a6e;line-height:1;white-space:nowrap;transform:scaleX(1.0171);transform-origin:0 0;">23/10/2025</div><div style="position:absolute;left:954.92px;top:911.90px;font-size:20px;font-weight:400;color:#4a1fd4;line-height:1;white-space:nowrap;transform:scaleX(1.0833);transform-origin:0 0;-webkit-text-stroke:0.4px #4a1fd4;">N</div><div style="position:absolute;left:992.50px;top:896.38px;font-size:21.2px;font-weight:400;color:#3f4f64;line-height:1;white-space:nowrap;-webkit-text-stroke:0.35px #3f4f64;">Nacio Guillén Huerta</div><div style="position:absolute;left:993.50px;top:925.88px;font-size:21.2px;font-weight:400;color:#4a5a6e;line-height:1;white-space:nowrap;transform:scaleX(0.9670);transform-origin:0 0;">45654758</div><div style="position:absolute;left:1424.79px;top:911.38px;font-size:21.2px;font-weight:400;color:#4a5a6e;line-height:1;white-space:nowrap;transform:scaleX(0.9145);transform-origin:0 0;">NE - PR</div><div style="position:absolute;left:1724.48px;top:911.38px;font-size:21.2px;font-weight:400;color:#4a5a6e;line-height:1;white-space:nowrap;transform:scaleX(1.0198);transform-origin:0 0;">Contador</div><div style="position:absolute;left:2204.97px;top:911.38px;font-size:21.2px;font-weight:400;color:#4a5a6e;line-height:1;white-space:nowrap;transform:scaleX(0.9341);transform-origin:0 0;">Sura</div><div style="position:absolute;left:2476.00px;top:911.38px;font-size:21.2px;font-weight:400;color:#4a5a6e;line-height:1;white-space:nowrap;transform:scaleX(1.0036);transform-origin:0 0;">A- (A negativo)</div>
<div style="position:absolute;left:153px;top:438px;width:2651.4px;height:86.6px;border:6.6px solid #ec3c3e;border-radius:16px;box-sizing:border-box"></div><svg style="position:absolute;left:600px;top:480px;filter:drop-shadow(1px 2.5px 2px rgba(0,0,0,.35))" width="70" height="70" viewBox="600 480 70 70">
<path d="M621 490.5 C623.5 489 626 490 627 492 L634.7 507.5 C635 500.5 638.5 497.5 641 499.5 L642.5 505.5 C643 498 648 496 650 499.5 L651 503.5 C652 497.5 657 497 658 500.5 C660.5 507 660.5 515 659 522 L659.5 530.5 L654 532 L651 528.5 L649 533 L637.5 536 L636 532.5 C629 527 624 522 619.5 518 C616.5 515 617.5 510 621.5 510.5 C624 511 627.5 513.5 630 516 L620.5 493.5 C620 492 620.3 491 621 490.5 Z" fill="#fff" stroke="#0a0f1c" stroke-width="2.4" stroke-linejoin="round"/>
<path d="M638 515.6 L640 525 M643.8 513.8 L645.6 523.8 M649.4 512.5 L651.9 521.9" stroke="#0a0f1c" stroke-width="2.4" stroke-linecap="round"/>
</svg><div style="position:absolute;left:2497.6px;top:1321.5px;width:358.2px;height:71.8px;background:#2f3f54;border-radius:14px;box-shadow:0 0 0 1.5px #fff,0 4px 14px rgba(0,0,0,.10)"></div><svg style="position:absolute;left:2520px;top:1344.5px" width="27" height="27" viewBox="0 0 27 27">
<circle cx="13.5" cy="13.5" r="12.8" fill="#a8f1b6"/><path d="M8.5 14l3.3 3.2 6.5-6.5" fill="none" stroke="#2b3a4c" stroke-width="1.4" stroke-linecap="round" stroke-linejoin="round"/></svg><svg style="position:absolute;left:2802px;top:1346.5px" width="24" height="23" viewBox="0 0 24 23" fill="none" stroke="#fff" stroke-width="2.2" stroke-linecap="round">
<path d="M2.5 2l19 19M21.5 2l-19 19"/></svg>
<div style="position:absolute;left:2562.51px;top:1347.35px;font-size:21px;font-weight:400;color:#ffffff;line-height:1;white-space:nowrap;transform:scaleX(0.9850);transform-origin:0 0;-webkit-text-stroke:0.7px #ffffff;">Se ha revisado la firma</div>
</body></html>
